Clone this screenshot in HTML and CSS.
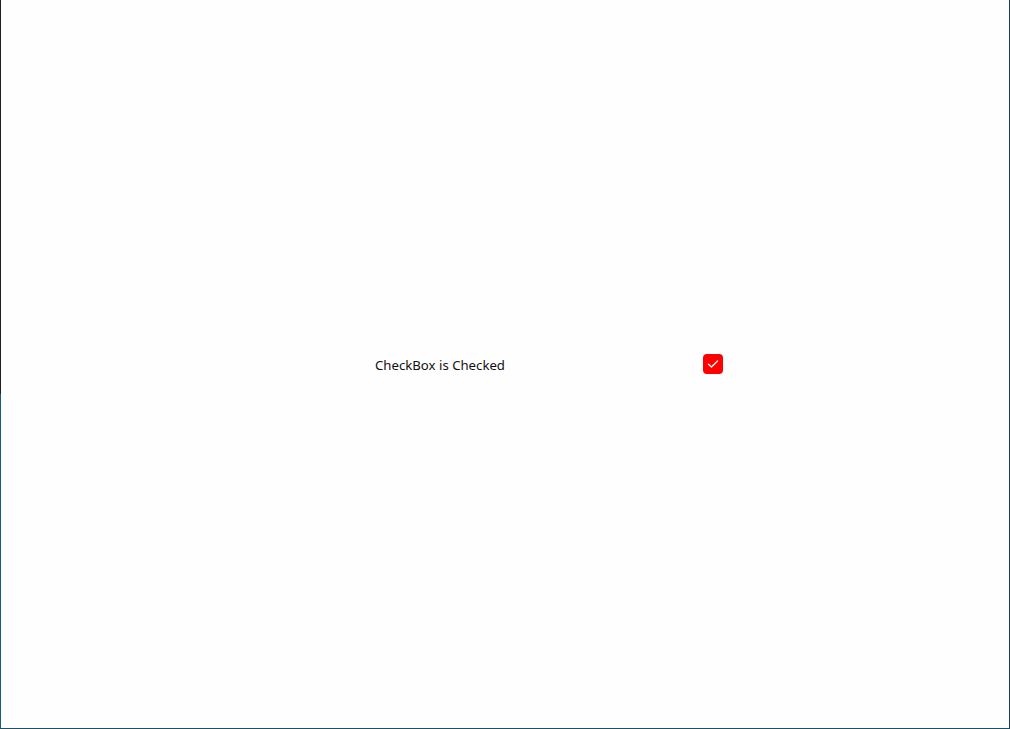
FILE: index.html
```html
<!DOCTYPE html>
<html>
<head>
<meta charset="utf-8">
<link rel="stylesheet" href="styles.css">
</head>
<body>
<div class="frame">
  <div class="edge-left"><div class="edge-dark"></div><div class="edge-teal"></div></div>
  <div class="content">
    <div class="row">
      <span class="label">CheckBox is Checked</span>
      <span class="check" role="checkbox" aria-checked="true">
        <svg width="12" height="10" viewBox="0 0 12 10"><path d="M1.5 5.2 L4.5 8 L10.5 2" fill="none" stroke="#fff" stroke-width="1.3" stroke-linecap="round" stroke-linejoin="round"/></svg>
      </span>
    </div>
  </div>
</div>
</body>
</html>
```
FILE: styles.css
```css
html, body {
  margin: 0;
  padding: 0;
  background: #fff;
}
.frame {
  width: 1010px;
  height: 729px;
  box-sizing: border-box;
  display: flex;
  border-right: 1px solid #1d3557;
  border-bottom: 1px solid #1a4f6e;
  background: #fefefe;
}
.edge-left {
  width: 1px;
  display: flex;
  flex-direction: column;
}
.edge-dark {
  height: 394px;
  background: #202020;
}
.edge-teal {
  flex: 1;
  background: #136081;
}
.content {
  flex: 1;
  display: flex;
  align-items: center;
}
.row {
  display: grid;
  grid-template-columns: 328px 20px;
  align-items: center;
  margin-left: 374px;
}
.label {
  font-family: "Noto Sans", "Open Sans", sans-serif;
  font-size: 13.2px;
  color: #111;
  line-height: 20px;
  padding-top: 2px;
}
.check {
  width: 20px;
  height: 20px;
  border-radius: 4px;
  background: #ff0000;
  display: flex;
  align-items: center;
  justify-content: center;
}
```
